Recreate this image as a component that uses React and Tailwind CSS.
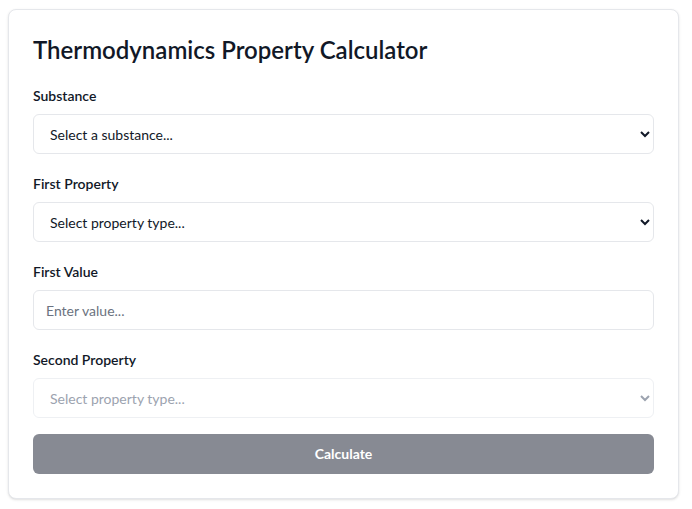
import React from 'react';

const fieldBase =
  'w-full h-10 rounded-md border border-[#e5e7eb] bg-white px-3 text-sm focus:outline-none';

function Field({ label, children }) {
  return (
    <div className="mb-5">
      <label className="block text-sm font-semibold text-[#111827] mb-2">{label}</label>
      {children}
    </div>
  );
}

export default function App() {
  return (
    <div className="min-h-screen bg-white pt-[9px] pl-2 pr-[13px] font-['Lato','Noto_Sans',sans-serif]">
      <div className="rounded-lg border border-[#e5e7eb] bg-white shadow-sm p-6">
        <h1 className="text-2xl font-semibold text-[#111827] mb-5">
          Thermodynamics Property Calculator
        </h1>

        <Field label="Substance">
          <select className={`${fieldBase} text-[#111827]`} defaultValue="">
            <option value="">Select a substance...</option>
          </select>
        </Field>

        <Field label="First Property">
          <select className={`${fieldBase} text-[#111827]`} defaultValue="">
            <option value="">Select property type...</option>
          </select>
        </Field>

        <Field label="First Value">
          <input
            type="text"
            placeholder="Enter value..."
            className={`${fieldBase} placeholder:text-[#6b7280]`}
          />
        </Field>

        <div className="mb-4">
          <label className="block text-sm font-semibold text-[#111827] mb-2">Second Property</label>
          <select
            disabled
            className={`${fieldBase} border-[#eef0f3] text-[#9ca3af]`}
            defaultValue=""
          >
            <option value="">Select property type...</option>
          </select>
        </div>

        <button
          disabled
          className="w-full h-10 rounded-md bg-[#878a93] text-white text-sm font-bold"
        >
          Calculate
        </button>
      </div>
    </div>
  );
}
